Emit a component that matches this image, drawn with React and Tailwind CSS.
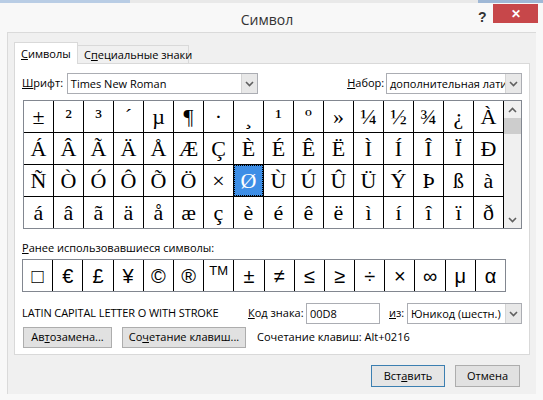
import React from 'react';

const ROWS = [
  ['±', '²', '³', '´', 'µ', '¶', '·', '¸', '¹', 'º', '»', '¼', '½', '¾', '¿', 'À'],
  ['Á', 'Â', 'Ã', 'Ä', 'Å', 'Æ', 'Ç', 'È', 'É', 'Ê', 'Ë', 'Ì', 'Í', 'Î', 'Ï', 'Ð'],
  ['Ñ', 'Ò', 'Ó', 'Ô', 'Õ', 'Ö', '×', 'Ø', 'Ù', 'Ú', 'Û', 'Ü', 'Ý', 'Þ', 'ß', 'à'],
  ['á', 'â', 'ã', 'ä', 'å', 'æ', 'ç', 'è', 'é', 'ê', 'ë', 'ì', 'í', 'î', 'ï', 'ð'],
];

const RECENT = ['□', '€', '£', '¥', '©', '®', '™', '±', '≠', '≤', '≥', '÷', '×', '∞', 'μ', 'α'];

function Chevron({ up }) {
  return (
    <svg width="9" height="6" viewBox="0 0 9 6">
      <path d={up ? 'M1 5 L4.5 1.5 L8 5' : 'M1 1 L4.5 4.5 L8 1'} fill="none" stroke="#606060" strokeWidth="1.6" />
    </svg>
  );
}

function Select({ value, className }) {
  return (
    <div className={`flex h-[21px] border border-[#abadb3] bg-white ${className}`}>
      <div className="flex-1 overflow-hidden whitespace-nowrap pl-[3px] leading-[19px]">{value}</div>
      <div className="flex w-[16px] items-center justify-center border-l border-[#d4d4d4] bg-[#e8e8e8]">
        <Chevron />
      </div>
    </div>
  );
}

function Btn({ children, className = '', primary }) {
  return (
    <div
      className={`flex h-[21px] items-center justify-center whitespace-nowrap border ${
        primary ? 'border-[#3c7fb1] bg-[#e5e5e5]' : 'border-[#adadad] bg-[#e1e1e1]'
      } ${className}`}
    >
      {children}
    </div>
  );
}

export default function App() {
  return (
    <div className="relative h-[400px] w-[543px] overflow-hidden bg-[#f8f8f8] text-[11px] text-black [font-family:'Open_Sans',sans-serif]">
      {/* window edge strip */}
      <div className="flex h-[3px]">
        <div className="w-[130px] bg-[#b9cde5]" />
        <div className="flex-1 bg-[#e9e9e9]" />
        <div className="w-[65px] bg-[#9fb8d6]" />
      </div>

      {/* title bar */}
      <div className="flex h-[28px] items-start">
        <div className="flex-1 pl-[56px] pt-[6px] text-center text-[14px] text-[#333]">Символ</div>
        <div className="mt-[4px] w-[14px] text-[14px] font-bold text-[#333] [font-family:'Liberation_Sans',sans-serif]">?</div>
        <div className="ml-px mr-[5px] mt-px flex h-[19px] w-[45px] items-center justify-center bg-[#c7474a] text-[12px] font-bold text-white [font-family:'Liberation_Sans',sans-serif]">
          ✕
        </div>
      </div>

      {/* client area */}
      <div className="mx-[7px] mt-px h-[362px] border-l border-t border-[#dadada] bg-[#f0f0f0] px-[6px] pt-[9px]">
        {/* tabs */}
        <div className="flex h-[21px] items-end">
          <div className="relative z-10 -mb-px h-[22px] w-[64px] whitespace-nowrap border border-b-0 border-[#d9d9d9] bg-white pl-[6px] pt-[3px]">
            <span className="underline">С</span>имволы
          </div>
          <div className="h-[18px] w-[111px] whitespace-nowrap border border-b-0 border-l-0 border-[#d9d9d9] bg-[#f0f0f0] pl-[6px] leading-[17px]">
            С<span className="underline">п</span>ециальные знаки
          </div>
        </div>

        {/* panel */}
        <div className="h-[292px] w-[516px] border border-[#d9d9d9] bg-white px-[7px] pt-[9px]">
          {/* font row */}
          <div className="flex h-[21px] items-center whitespace-nowrap">
            <div className="w-[45px]">
              <span className="underline">Ш</span>рифт:
            </div>
            <Select value="Times New Roman" className="w-[192px]" />
            <div className="ml-[89px] w-[39px]">
              <span className="underline">Н</span>абор:
            </div>
            <Select value="дополнительная латиница-1" className="w-[136px]" />
          </div>

          {/* character grid */}
          <div className="ml-px mt-[6px] flex h-[129px] w-[499px] border border-[#828790]">
            <div className="grid grid-cols-[repeat(16,29px)] grid-rows-[repeat(4,31px)] gap-px bg-black pr-px pb-px [font-family:'Liberation_Serif',serif]">
              {ROWS.map((row, r) =>
                row.map((ch, c) => {
                  const sel = r === 2 && c === 7;
                  return (
                    <div
                      key={`${r}-${c}`}
                      className={`flex items-center justify-center text-[22px] leading-none ${
                        sel ? 'border border-dotted border-black bg-[#3d8ee6] text-white' : 'bg-white'
                      }`}
                    >
                      {ch}
                    </div>
                  );
                })
              )}
            </div>
            <div className="flex w-[17px] flex-col bg-[#f0f0f0]">
              <div className="flex h-[17px] items-center justify-center">
                <Chevron up />
              </div>
              <div className="h-[16px] bg-[#cdcdcd]" />
              <div className="flex-1" />
              <div className="flex h-[17px] items-center justify-center">
                <Chevron />
              </div>
            </div>
          </div>

          {/* recent */}
          <div className="mt-[11px] leading-[16px]">
            <span className="underline">Р</span>анее использовавшиеся символы:
          </div>
          <div className="mt-[3px] flex h-[33px] w-[484px] border border-[#828790]">
            {RECENT.map((ch, i) => (
              <div
                key={i}
                className={`flex flex-1 items-center justify-center text-[20px] [font-family:'Liberation_Sans',sans-serif] ${
                  i < RECENT.length - 1 ? 'border-r border-black' : ''
                }`}
              >
                {ch === '™' ? <span className="mb-[9px] text-[13px]">TM</span> : ch}
              </div>
            ))}
          </div>

          {/* code row */}
          <div className="mt-[11px] flex h-[21px] items-center whitespace-nowrap">
            <div className="w-[226px] text-[11px] tracking-[-0.1px]">LATIN CAPITAL LETTER O WITH STROKE</div>
            <div className="w-[58px]">
              <span className="underline">К</span>од знака:
            </div>
            <div className="h-[21px] w-[74px] border border-[#abadb3] bg-white pl-[3px] leading-[19px]">00D8</div>
            <div className="ml-[9px] w-[18px]">
              <span className="underline">и</span>з:
            </div>
            <Select value="Юникод (шестн.)" className="w-[115px]" />
          </div>

          {/* buttons row */}
          <div className="mt-[3px] flex h-[21px] items-center whitespace-nowrap">
            <Btn className="ml-px w-[89px]">
              Ав<span className="underline">т</span>озамена...
            </Btn>
            <Btn className="ml-[10px] w-[124px]">
              Со<span className="underline">ч</span>етание клавиш...
            </Btn>
            <div className="ml-[11px]">Сочетание клавиш: Alt+0216</div>
          </div>
        </div>

        {/* dialog buttons */}
        <div className="mt-[10px] flex justify-end pr-[10px]">
          <Btn primary className="h-[22px] w-[74px]">
            Вст<span className="underline">а</span>вить
          </Btn>
          <Btn className="ml-[10px] h-[22px] w-[65px]">Отмена</Btn>
        </div>
      </div>
    </div>
  );
}
